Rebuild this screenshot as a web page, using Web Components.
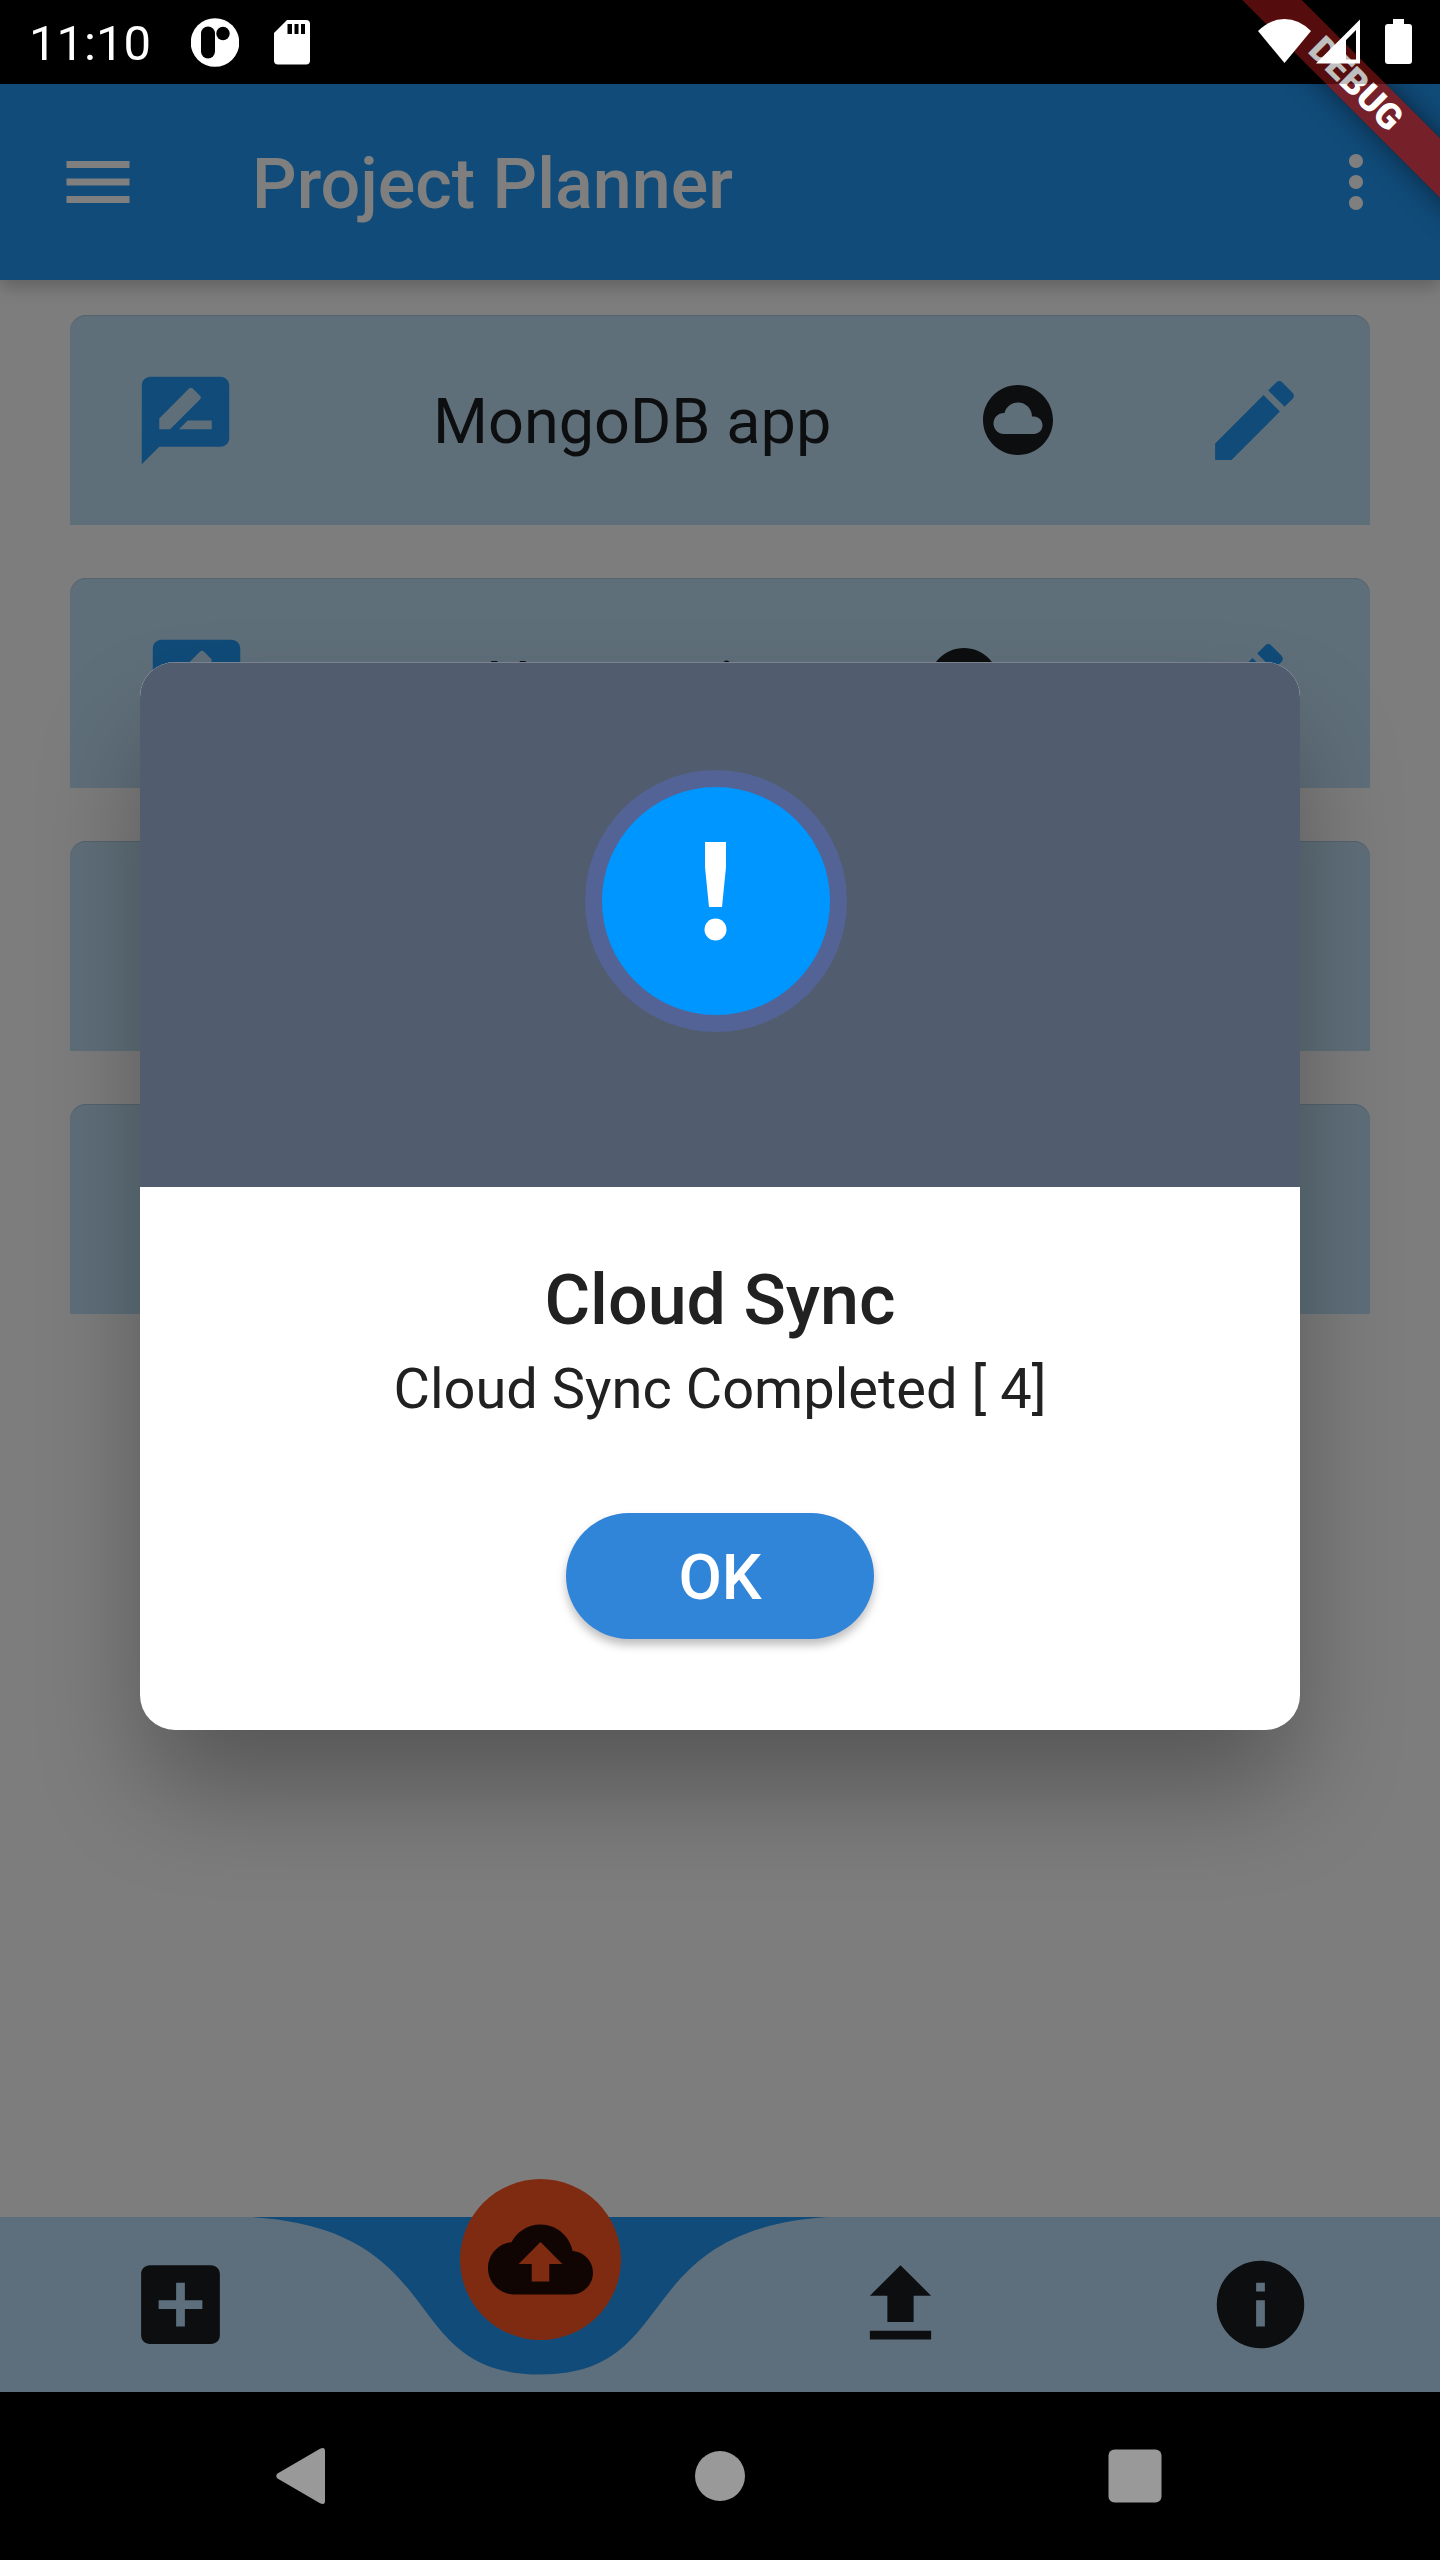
<!DOCTYPE html>
<html lang="en">
<head>
<meta charset="utf-8">
<meta name="viewport" content="width=device-width, initial-scale=1">
<title>Project Planner</title>
<style>
  html, body { margin: 0; height: 100%; background: #000; }
  body { font-family: Roboto, "Noto Sans", sans-serif; }
</style>
</head>
<body>
<planner-app>
  <status-bar slot="status" time="11:10"></status-bar>
  <app-bar slot="header">Project Planner</app-bar>
  <project-card>MongoDB app</project-card>
  <project-card style="--edge: 74px; --lead: 237px; --trail: 185px">New project</project-card>
  <project-card blank></project-card>
  <project-card blank></project-card>
  <curved-bar slot="footer"></curved-bar>
  <system-nav slot="nav"></system-nav>
  <debug-banner slot="banner">DEBUG</debug-banner>
  <alert-dialog slot="dialog">
    <span slot="title">Cloud Sync</span>
    <span slot="message">Cloud Sync Completed [ 4]</span>
    <span slot="action">OK</span>
  </alert-dialog>
</planner-app>

<script>
const ICONS = {
  menu: '<path d="M3 18h18v-2H3v2zm0-5h18v-2H3v2zm0-7v2h18V6H3z"/>',
  more: '<path d="M12 8c1.1 0 2-.9 2-2s-.9-2-2-2-2 .9-2 2 .9 2 2 2zm0 2c-1.1 0-2 .9-2 2s.9 2 2 2 2-.9 2-2-.9-2-2-2zm0 6c-1.1 0-2 .9-2 2s.9 2 2 2 2-.9 2-2-.9-2-2-2z"/>',
  review: '<path d="M20 2H4c-1.1 0-1.99.9-1.99 2L2 22l4-4h14c1.1 0 2-.9 2-2V4c0-1.1-.9-2-2-2zM6 14v-2.47l6.88-6.88c.2-.2.51-.2.71 0l1.77 1.77c.2.2.2.51 0 .71L8.47 14H6zm12 0h-7.5l2-2H18v2z"/>',
  cloud: '<path d="M12 2C6.48 2 2 6.48 2 12s4.48 10 10 10 10-4.48 10-10S17.52 2 12 2zm4.5 14H8c-1.66 0-3-1.34-3-3s1.34-3 3-3l.14.01C8.58 8.28 10.13 7 12 7c2.21 0 4 1.79 4 4h.5c1.38 0 2.5 1.12 2.5 2.5S17.88 16 16.5 16z"/>',
  edit: '<path d="M3 17.25V21h3.75L17.81 9.94l-3.75-3.75L3 17.25zM20.71 7.04c.39-.39.39-1.02 0-1.41l-2.34-2.34c-.39-.39-1.02-.39-1.41 0l-1.83 1.83 3.75 3.75 1.83-1.83z"/>',
  add: '<path d="M19 3H5c-1.11 0-2 .9-2 2v14c0 1.1.89 2 2 2h14c1.1 0 2-.9 2-2V5c0-1.1-.9-2-2-2zm-2 10h-4v4h-2v-4H7v-2h4V7h2v4h4v2z"/>',
  backup: '<path d="M19.35 10.04C18.67 6.59 15.64 4 12 4 9.11 4 6.6 5.64 5.35 8.04 2.34 8.36 0 10.91 0 14c0 3.31 2.69 6 6 6h13c2.76 0 5-2.24 5-5 0-2.64-2.05-4.78-4.65-4.96zM14 13v4h-4v-4H7l5-5 5 5h-3z"/>',
  upload: '<path d="M9 16h6v-6h4l-7-7-7 7h4zm-4 2h14v2H5z"/>',
  info: '<path d="M12 2C6.48 2 2 6.48 2 12s4.48 10 10 10 10-4.48 10-10S17.52 2 12 2zm1 15h-2v-6h2v6zm0-8h-2V7h2v2z"/>'
};

const BUTTON_RESET = `
  button { appearance: none; border: 0; margin: 0; padding: 0; background: none;
    color: inherit; font: inherit; display: flex; align-items: center; justify-content: center; cursor: pointer; }
`;

function define(name, html) {
  const template = document.createElement('template');
  template.innerHTML = html;
  customElements.define(name, class extends HTMLElement {
    constructor() {
      super();
      this.attachShadow({ mode: 'open' }).append(template.content.cloneNode(true));
    }
  });
}

class MdIcon extends HTMLElement {
  constructor() {
    super();
    this.attachShadow({ mode: 'open' });
  }
  connectedCallback() {
    this.shadowRoot.innerHTML = `
      <style>
        :host { display: block; flex: none; width: var(--icon, 84px); height: var(--icon, 84px); }
        svg { display: block; width: 100%; height: 100%; fill: currentColor; }
      </style>
      <svg viewBox="0 0 24 24" aria-hidden="true">${ICONS[this.getAttribute('name')]}</svg>`;
  }
}
customElements.define('md-icon', MdIcon);

define('planner-app', `
  <style>
    :host { display: flex; flex-direction: column; position: relative; min-height: 100vh; overflow: hidden; background: #000; }
    main { flex: 1; display: flex; flex-direction: column; gap: 53px; padding: 35px 70px; background: #fafafa; }
  </style>
  <slot name="status"></slot>
  <slot name="header"></slot>
  <main><slot></slot></main>
  <slot name="footer"></slot>
  <slot name="nav"></slot>
  <slot name="dialog"></slot>
  <slot name="banner"></slot>
`);

class StatusBar extends HTMLElement {
  constructor() {
    super();
    this.attachShadow({ mode: 'open' });
  }
  connectedCallback() {
    this.shadowRoot.innerHTML = `
      <style>
        :host { display: flex; align-items: center; height: 84px; padding: 0 28px; box-sizing: border-box;
          position: relative; z-index: 3; background: rgba(0,0,0,.25); color: #fff; }
        time { font-size: 49px; line-height: 58px; padding: 3px 40px 0 1px; }
        svg { display: block; fill: #fff; height: 84px; flex: none; }
        .left { display: flex; gap: 35px; flex: 1; }
        .right { display: flex; gap: 5px; }
        .battery { margin-left: 20px; }
      </style>
      <time>${this.getAttribute('time')}</time>
      <div class="left">
        <svg width="48" viewBox="0 0 48 84"><circle cx="24" cy="42.500" r="24.300"/><rect x="10" y="26.500" width="14" height="32" rx="7" fill="#000"/><circle cx="32" cy="33.500" r="6.700" fill="#000"/></svg>
        <svg width="36" viewBox="0 0 36 84"><path d="M13 20h19q4 0 4 4v36.500q0 4-4 4H4q-4 0-4-4V33z"/><path fill="#000" d="M13.500 24h4.500v10h-4.500zM20.500 24h4v10h-4zM27 24h4v10h-4z"/></svg>
      </div>
      <div class="right">
        <svg width="53" viewBox="0 0 53 84"><path d="M26.500 63L0 31Q12 19 26.500 19T53 31z"/></svg>
        <svg width="44" viewBox="0 0 44 84"><path fill-rule="evenodd" d="M0 63.500L44 19.500V63.500zM30 59.500h10V30L30 40z"/></svg>
        <svg class="battery" width="27" viewBox="0 0 27 84"><path d="M8 19h11v5h5q3 0 3 3v34q0 3-3 3H3q-3 0-3-3V27q0-3 3-3h5z"/></svg>
      </div>`;
  }
}
customElements.define('status-bar', StatusBar);

define('app-bar', `
  <style>
    ${BUTTON_RESET}
    :host { display: flex; align-items: center; height: 196px; padding: 0 42px 0 56px; box-sizing: border-box;
      background: #2196f3; color: #fff; position: relative; box-shadow: 0 7px 16px rgba(0,0,0,.22); }
    h1 { flex: 1; margin: 0 0 0 112px; padding-top: 3px; font-size: 70px; line-height: 82px; font-weight: 500; }
  </style>
  <button aria-label="Menu"><md-icon name="menu"></md-icon></button>
  <h1><slot></slot></h1>
  <button aria-label="More"><md-icon name="more"></md-icon></button>
`);

class ProjectCard extends HTMLElement {
  constructor() {
    super();
    this.attachShadow({ mode: 'open' });
  }
  connectedCallback() {
    const content = this.hasAttribute('blank') ? '' : `
      <button class="blue" aria-label="Review"><md-icon name="review"></md-icon></button>
      <span class="name"><slot></slot></span>
      <md-icon class="sync" name="cloud"></md-icon>
      <button class="blue edit" aria-label="Edit"><md-icon name="edit"></md-icon></button>`;
    this.shadowRoot.innerHTML = `
      <style>
        ${BUTTON_RESET}
        :host { display: flex; align-items: center; height: 210px; box-sizing: border-box; padding: 0 var(--edge, 63px);
          background: #bfdff2; border-radius: 16px 16px 0 0; color: rgba(0,0,0,.87); box-shadow: inset 0 1px 0 #aac6dd; }
        .name { margin-left: var(--lead, 195px); padding-top: 3px; font-size: 63px; line-height: 74px; white-space: nowrap; }
        .blue { color: #2196f3; --icon: 105px; }
        .sync { margin-left: auto; }
        .edit { margin-left: var(--trail, 142px); }
      </style>${content}`;
  }
}
customElements.define('project-card', ProjectCard);

define('curved-bar', `
  <style>
    ${BUTTON_RESET}
    :host { display: block; position: relative; height: 175px; background: #2196f3; color: rgba(0,0,0,.87); }
    .shape { position: absolute; inset: 0; width: 100%; height: 100%; fill: #bbdefb; }
    nav { position: relative; display: grid; grid-template-columns: repeat(4, 1fr); height: 100%; --icon: 105px; }
    .fab { position: relative; bottom: 45px; place-self: center; width: 161px; height: 161px; border-radius: 50%; background: #ff5722; }
  </style>
  <svg class="shape" viewBox="0 0 1440 175" preserveAspectRatio="none" aria-hidden="true">
    <path d="M0 0H252C453.600 13 396 157.500 540 157.500S626.400 13 828 0H1440V175H0z"/>
  </svg>
  <nav>
    <button aria-label="Add"><md-icon name="add"></md-icon></button>
    <button class="fab" aria-label="Sync to cloud"><md-icon name="backup"></md-icon></button>
    <button aria-label="Upload"><md-icon name="upload"></md-icon></button>
    <button aria-label="Info"><md-icon name="info"></md-icon></button>
  </nav>
`);

define('system-nav', `
  <style>
    ${BUTTON_RESET}
    :host { display: grid; grid-template-columns: repeat(3, 415px); justify-content: center; height: 168px;
      position: relative; z-index: 3; background: #000; }
    svg { width: 84px; height: 84px; fill: #999; }
  </style>
  <button aria-label="Back"><svg viewBox="0 0 84 84"><path d="M14.500 39.500L57 14.800Q62 12.500 62 17V67Q62 71.500 57 69.200L14.500 44.500Q12 42 14.500 39.500z"/></svg></button>
  <button aria-label="Home"><svg viewBox="0 0 84 84"><circle cx="42" cy="42" r="25"/></svg></button>
  <button aria-label="Recent apps"><svg viewBox="0 0 84 84"><rect x="15.500" y="15.500" width="53" height="53" rx="6"/></svg></button>
`);

define('debug-banner', `
  <style>
    :host { position: absolute; z-index: 2; top: 0; right: 0; width: 168px; height: 168px;
      display: flex; align-items: center; justify-content: center; pointer-events: none; }
    .band { flex: none; width: 340px; height: 42px; transform: rotate(45deg); text-align: center;
      font-size: 36px; line-height: 42px; font-weight: 900; color: #fff;
      background: linear-gradient(rgba(183,28,28,.627), rgba(183,28,28,.627)), rgba(0,0,0,.45);
      box-shadow: 0 0 28px rgba(0,0,0,.5); }
  </style>
  <div class="band"><slot></slot></div>
`);

define('alert-dialog', `
  <style>
    ${BUTTON_RESET}
    :host { position: absolute; inset: 0 0 168px; z-index: 1; display: flex; align-items: center; padding: 0 140px; background: rgba(0,0,0,.5); }
    section { flex: 1; border-radius: 35px; overflow: hidden; background: #fff; color: #212121;
      box-shadow: 0 64px 110px -8px rgba(0,0,0,.32); text-align: center; }
    header { height: 525px; box-sizing: border-box; padding: 107px 8px 0 0; display: flex; justify-content: center;
      align-items: flex-start; background: #515c6e; border-top: 1px solid #7b8390; }
    .badge { width: 262px; height: 262px; }
    .body { display: flex; flex-direction: column; align-items: center; padding: 72px 35px 91px; }
    h2 { margin: 0 0 15px; font-size: 70px; line-height: 82px; font-weight: 500; }
    p { margin: 0 0 91px; font-size: 56px; line-height: 66px; }
    .ok { width: 308px; height: 126px; padding-top: 3px; border-radius: 63px; background: #3085d8; color: #fff; font-size: 63px; font-weight: 500;
      box-shadow: 0 6px 10px rgba(0,0,0,.26); }
  </style>
  <section role="dialog" aria-modal="true">
    <header>
      <svg class="badge" viewBox="0 0 262 262" aria-hidden="true">
        <circle cx="131" cy="131" r="131" fill="#536395"/>
        <circle cx="131" cy="131" r="114" fill="#0096ff"/>
        <path d="M120 72h21v25l-4 40h-13l-4-40z" fill="#fff"/>
        <circle cx="130.500" cy="159.500" r="11" fill="#fff"/>
      </svg>
    </header>
    <div class="body">
      <h2><slot name="title"></slot></h2>
      <p><slot name="message"></slot></p>
      <button class="ok"><slot name="action"></slot></button>
    </div>
  </section>
`);
</script>
</body>
</html>
